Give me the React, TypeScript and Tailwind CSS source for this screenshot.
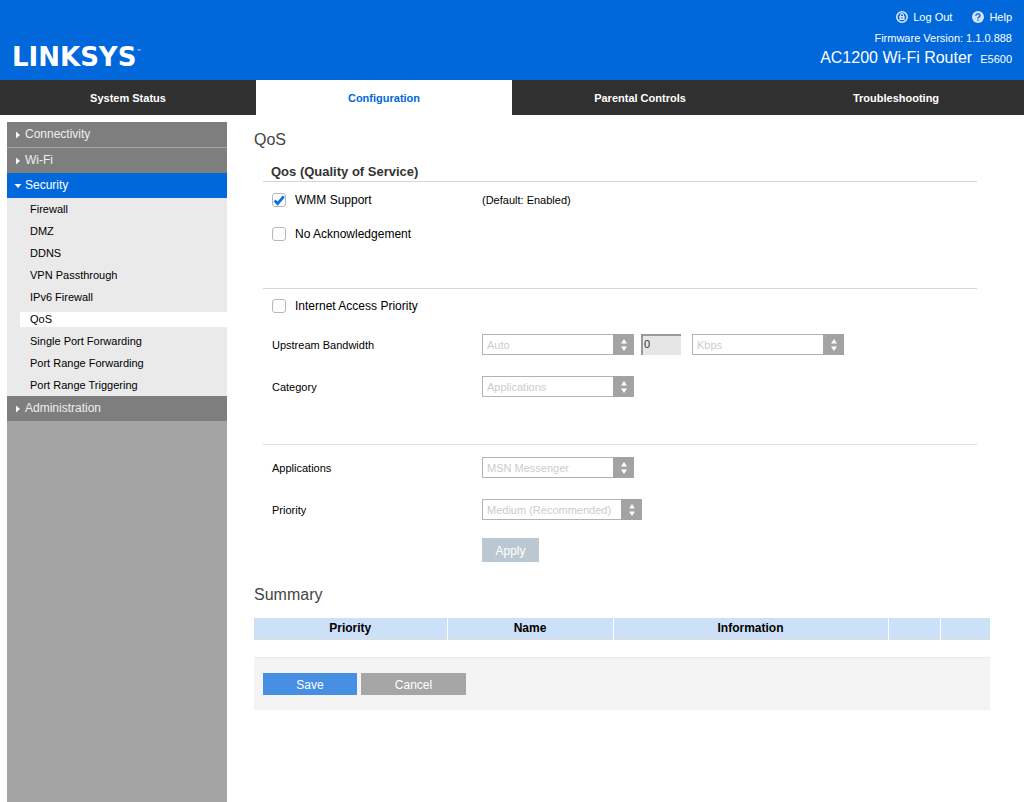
import clsx from 'clsx';
import { useState } from 'react';

type SelectBoxProps = {
    id: string;
    label: string;
    value: string;
    wide?: boolean;
};

const tabs = ['System Status', 'Configuration', 'Parental Controls', 'Troubleshooting'];

const securityItems = [
    'Firewall',
    'DMZ',
    'DDNS',
    'VPN Passthrough',
    'IPv6 Firewall',
    'QoS',
    'Single Port Forwarding',
    'Port Range Forwarding',
    'Port Range Triggering',
];

function LockIcon() {
    return (
        <svg viewBox="0 0 12 12" className="size-3" aria-hidden="true">
            <circle cx="6" cy="6" r="5.2" fill="none" stroke="#d3e4f9" strokeWidth="1.6" />
            <path d="M4.5 5.4V4.1a1.5 1.5 0 0 1 3 0v1.3" fill="none" stroke="#d3e4f9" strokeWidth="1.1" />
            <path d="M3.4 5h5.2v4H3.4z" fill="#d3e4f9" />
            <path d="M5.5 6h1v2h-1z" fill="#0068db" />
        </svg>
    );
}

function HelpIcon() {
    return (
        <svg viewBox="0 0 12 12" className="size-3" aria-hidden="true">
            <circle cx="6" cy="6" r="6" fill="#d3e4f9" />
            <path d="M4 4.8a2 1.8 0 1 1 3 1.3c-.7.4-1 .6-1 1.3" fill="none" stroke="#0068db" strokeWidth="1.4" />
            <path d="M5.3 8.4h1.4v1.3H5.3z" fill="#0068db" />
        </svg>
    );
}

function MenuHeader({ title, open = false }: { title: string; open?: boolean }) {
    return (
        <button
            type="button"
            aria-expanded={open}
            className={clsx(
                'flex h-[25px] w-full items-center pb-px text-left text-xs',
                open ? 'bg-[#0068db] text-white' : 'bg-[#7e7e7e] text-[#eeeeee]',
            )}
        >
            <span className="flex w-[18px] justify-center pt-0.5 pl-1">
                {open ? (
                    <svg viewBox="0 0 8 4" className="h-1 w-2" aria-hidden="true">
                        <path d="M.5 0h7L4 4z" fill="#fff" />
                    </svg>
                ) : (
                    <svg viewBox="0 0 4 8" className="h-2 w-1" aria-hidden="true">
                        <path d="M0 .5v7L4 4z" fill="#fff" />
                    </svg>
                )}
            </span>
            {title}
        </button>
    );
}

function SelectBox({ id, label, value, wide = false }: SelectBoxProps) {
    return (
        <div className={clsx('relative h-[21px]', wide ? 'w-40' : 'w-38')}>
            <select
                id={id}
                aria-label={label}
                disabled
                className="block h-full w-full appearance-none border border-[#b3b3b3] bg-white pl-1 text-[11px] text-[#cccccc]"
            >
                <option>{value}</option>
            </select>
            <span className="pointer-events-none absolute inset-y-0 right-0 flex w-[21px] items-center justify-center bg-[#a3a3a3]">
                <svg viewBox="0 0 6 12" className="h-3 w-1.5" aria-hidden="true">
                    <path d="M0 4.5h6L3 0zM0 7.5h6L3 12z" fill="#fff" />
                </svg>
            </span>
        </div>
    );
}

function CheckBox({ id, label, checked = false }: { id: string; label: string; checked?: boolean }) {
    const [on, setOn] = useState(checked);

    return (
        <div className="flex w-[210px] items-center gap-[9px] text-xs">
            <span className="relative flex size-3.5">
                <input
                    id={id}
                    type="checkbox"
                    checked={on}
                    onChange={(e) => setOn(e.target.checked)}
                    className="size-3.5 appearance-none rounded-[3px] border border-[#b8b8b8] bg-white"
                />
                {on && (
                    <svg viewBox="0 0 14 14" className="pointer-events-none absolute inset-0" aria-hidden="true">
                        <path d="M2.6 7.6l3 3L11.8 3.4" fill="none" stroke="#0a6fe8" strokeWidth="2.8" />
                    </svg>
                )}
            </span>
            <label htmlFor={id}>{label}</label>
        </div>
    );
}

export default function App() {
    return (
        <div className="flex min-h-screen flex-col bg-white font-['Liberation_Sans',Arial,sans-serif] text-[11px] leading-4 text-black">
            <header className="flex h-20 items-end justify-between bg-[#0068db] px-3 text-white">
                <div className="flex items-start pb-[7px] font-['DejaVu_Sans',sans-serif] text-[26px] leading-8 font-bold">
                    LINKSYS
                    <span className="text-[5px] leading-5 font-normal">™</span>
                </div>
                <div className="flex flex-col items-end pb-[9px]">
                    <nav className="flex gap-5">
                        <a href="#logout" className="flex items-center gap-[5px]">
                            <LockIcon />
                            Log Out
                        </a>
                        <a href="#help" className="flex items-center gap-[5px]">
                            <HelpIcon />
                            Help
                        </a>
                    </nav>
                    <p className="mt-[5px]">Firmware Version: 1.1.0.888</p>
                    <p className="flex items-baseline gap-2 text-base leading-6">
                        AC1200 Wi-Fi Router <span className="text-[11px]">E5600</span>
                    </p>
                </div>
            </header>

            <nav className="grid h-[35px] grid-cols-4 bg-[#303030]">
                {tabs.map((tab) => (
                    <a
                        key={tab}
                        href="#tab"
                        className={clsx(
                            'flex items-center justify-center font-bold',
                            tab === 'Configuration' ? 'bg-white text-[#0068db]' : 'text-white',
                        )}
                    >
                        {tab}
                    </a>
                ))}
            </nav>

            <div className="flex grow pt-[7px]">
                <aside className="ml-[7px] w-[220px] shrink-0 bg-[#a4a4a4]">
                    <div className="flex flex-col gap-px">
                        <MenuHeader title="Connectivity" />
                        <MenuHeader title="Wi-Fi" />
                    </div>
                    <MenuHeader title="Security" open />
                    <ul className="bg-[#eaeaea]">
                        {securityItems.map((item) => (
                            <li key={item} className="flex h-[22px] items-center pl-[13px]">
                                <a
                                    href="#item"
                                    className={clsx('w-full pl-2.5 leading-[15px]', item === 'QoS' && 'bg-white')}
                                >
                                    {item}
                                </a>
                            </li>
                        ))}
                    </ul>
                    <MenuHeader title="Administration" />
                </aside>

                <main className="grow pt-2 pr-[34px] pl-[27px]">
                    <h1 className="text-base leading-5 text-[#444444]">QoS</h1>

                    <section className="mr-[13px] ml-[9px]">
                        <h2 className="mt-3 h-5 border-b border-[#d3d7da] pl-2 text-[13px] leading-5 font-bold text-[#333333]">
                            Qos (Quality of Service)
                        </h2>
                        <div className="flex h-[107px] flex-col gap-[18px] border-b border-[#d3d7da] pt-2.5 pl-[9px]">
                            <div className="flex items-center">
                                <CheckBox id="wmm" label="WMM Support" checked />
                                <span>(Default: Enabled)</span>
                            </div>
                            <CheckBox id="noack" label="No Acknowledgement" />
                        </div>

                        <div className="flex h-[156px] flex-col border-b border-[#dddddd] pt-[9px] pl-[9px]">
                            <CheckBox id="iap" label="Internet Access Priority" />
                            <div className="mt-5 flex items-center">
                                <label htmlFor="upstream" className="w-[210px]">
                                    Upstream Bandwidth
                                </label>
                                <SelectBox id="upstream" label="Upstream Bandwidth" value="Auto" />
                                <input
                                    aria-label="Bandwidth value"
                                    defaultValue="0"
                                    disabled
                                    className="mr-[11px] ml-[7px] h-[21px] w-10 border-t-2 border-l-2 border-[#999999] bg-[#e6e6e6] px-px pb-1 text-[#333333]"
                                />
                                <SelectBox id="unit" label="Bandwidth unit" value="Kbps" />
                            </div>
                            <div className="mt-[21px] flex items-center">
                                <label htmlFor="category" className="w-[210px]">
                                    Category
                                </label>
                                <SelectBox id="category" label="Category" value="Applications" />
                            </div>
                        </div>

                        <div className="flex flex-col gap-[21px] pt-3 pl-[9px]">
                            <div className="flex items-center">
                                <label htmlFor="applications" className="w-[210px]">
                                    Applications
                                </label>
                                <SelectBox id="applications" label="Applications" value="MSN Messenger" />
                            </div>
                            <div className="flex items-center">
                                <label htmlFor="priority" className="w-[210px]">
                                    Priority
                                </label>
                                <SelectBox id="priority" label="Priority" value="Medium (Recommended)" wide />
                            </div>
                        </div>
                        <button
                            type="button"
                            disabled
                            className="mt-[18px] ml-[219px] block h-6 w-[57px] bg-[#bcc8d1] pt-0.5 text-xs text-white"
                        >
                            Apply
                        </button>
                    </section>

                    <h1 className="mt-[23px] text-base leading-5 text-[#444444]">Summary</h1>
                    <table className="mt-[13px] w-full table-fixed text-xs">
                        <colgroup>
                            <col className="w-[193px]" />
                            <col className="w-[166px]" />
                            <col />
                            <col className="w-[52px]" />
                            <col className="w-[50px]" />
                        </colgroup>
                        <thead>
                            <tr className="h-[21px] border-b border-[#dddddd] bg-[#cce0f7]">
                                <th className="border-r border-r-white">Priority</th>
                                <th className="border-r border-r-white">Name</th>
                                <th className="border-r border-r-white">Information</th>
                                <td className="border-r border-r-white" />
                                <td />
                            </tr>
                        </thead>
                    </table>

                    <div className="mt-[17px] flex gap-1 border-t border-[#eaeaea] bg-[#f4f4f4] px-[9px] py-[15px] text-xs">
                        <button type="button" className="h-[22px] w-[94px] bg-[#478fe3] pt-0.5 text-white">
                            Save
                        </button>
                        <button type="button" className="h-[22px] w-[105px] bg-[#a6a6a6] pt-0.5 text-white">
                            Cancel
                        </button>
                    </div>
                </main>
            </div>
        </div>
    );
}
